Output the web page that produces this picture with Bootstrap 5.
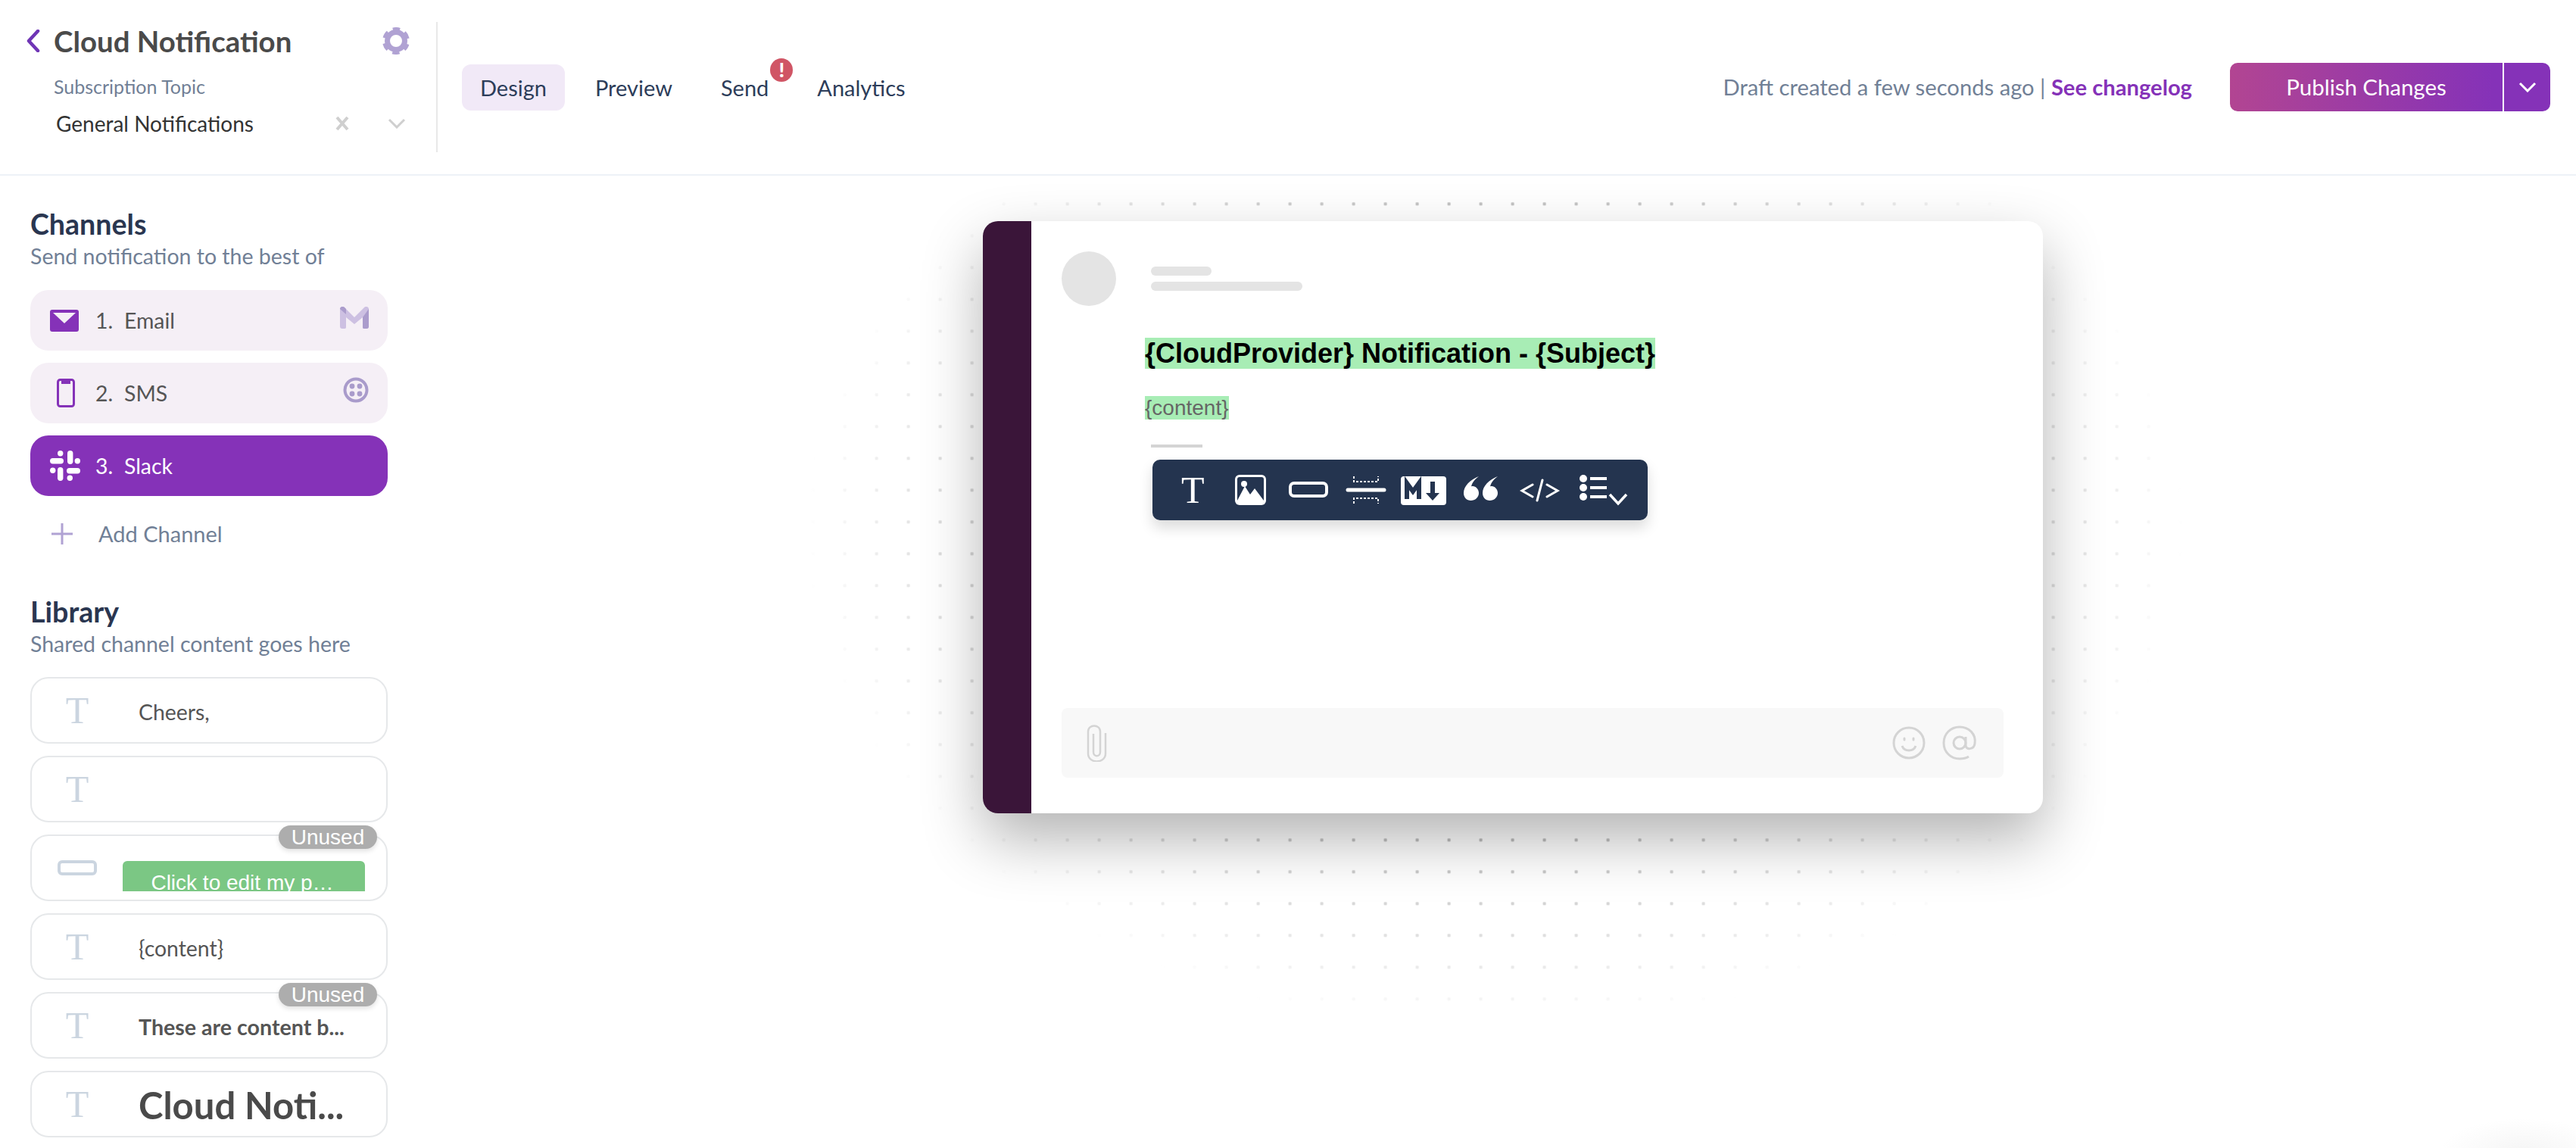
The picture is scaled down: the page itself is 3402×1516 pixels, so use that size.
<!DOCTYPE html>
<html lang="en">
<head>
  <meta charset="UTF-8" />
  <title>Cloud Notification</title>
  <link href="https://cdn.jsdelivr.net/npm/bootstrap@5.3.3/dist/css/bootstrap.min.css" rel="stylesheet" />
  <style>
    html, body { height: 100%; }
    body { font-family: "Lato", "Open Sans", sans-serif; font-size: 28.5px; color: #4a4a4a; background: radial-gradient(ellipse 110px 45px at 3333px 1522px, #f5f5f5, #fff); overflow: hidden; }
    svg { display: block; flex: none; }
    .hdr { height: 232px; border-bottom: 2px solid #edf2f7; }
    .topic-col { width: 578px; height: 172px; border-right: 2px solid #e8e8e8; padding: 2px 34px 0 35px; }
    .title-row { height: 46px; }
    .title-row h1 { font-size: 38.4px; line-height: 46px; font-weight: 700; color: #4a4a4a; margin: 0 0 0 18px; }
    .gear-icon { margin-left: auto; }
    .topic-label { font-size: 25px; line-height: 30px; color: #718096; margin: 22px 0 0 36px; }
    .topic-select { font-size: 28px; line-height: 38px; color: #333; margin: 15px 6px 0 39px; }
    .topic-x { margin-left: auto; margin-right: 50px; }
    .tab-list { margin-left: 32px; gap: 16px; font-size: 29px; }
    .tab-item { height: 61px; line-height: 61px; padding: 0 24px; border-radius: 12px; color: #2d3d5a; position: relative; }
    .tab-item.on { background: #f1e9f7; }
    .alert-dot { position: absolute; top: -8px; right: -8px; width: 30px; height: 31px; border-radius: 50%; background: #d05565; color: #fff; font-size: 27px; font-weight: 900; line-height: 30px; text-align: center; }
    .draft-note { color: #718096; margin-right: 50px; font-size: 29.2px; }
    .draft-note b { color: #8532b8; font-weight: 700; }
    .publish-btn { width: 423px; height: 64px; border-radius: 10px; background: linear-gradient(90deg, #b24592, #8532b8 82%); color: #fff; margin-right: 34px; font-size: 29.4px; }
    .publish-main { width: 362px; line-height: 64px; text-align: center; border-right: 2px solid #fff; }
    .publish-caret { width: 61px; }
    .side-col { width: 552px; padding: 40px 40px 0; flex: none; }
    .side-col h2 { font-size: 37.6px; line-height: 48px; font-weight: 700; color: #2a3650; margin: 0; }
    .side-sub { line-height: 36px; color: #718096; }
    .chan-list { margin-top: 27px; gap: 16px; font-size: 28.4px; }
    .chan-row { height: 80px; border-radius: 24px; background: #f5eff6; color: #555; padding: 0 25px 0 26px; }
    .chan-row.on { background: #8532b8; color: #fff; }
    .chan-ico { width: 42px; margin-right: 18px; }
    .chan-num { width: 38px; }
    .chan-brand { margin-left: auto; }
    .add-row { margin-top: 26px; height: 48px; color: #718096; padding-left: 28px; font-size: 29px; }
    .add-row span { margin-left: 34px; }
    .lib-title { margin-top: 55px !important; }
    .lib-list { margin-top: 26px; gap: 16px; font-size: 28.4px; }
    .lib-item { height: 88px; border: 2px solid #e6e8ea; border-radius: 24px; position: relative; color: #555; }
    .lib-ico { width: 120px; color: #cbd5e0; font-family: "Liberation Serif", serif; font-size: 50px; line-height: 1; text-align: center; }
    .lib-text { margin: 4px 0 0 21px; }
    .lib-text.bold { font-weight: 700; font-size: 28.6px; }
    .lib-text.big { font-weight: 700; font-size: 49px; color: #4a4a4a; }
    .btn-clip { width: 320px; height: 40px; overflow: hidden; background: #7bc784; border-radius: 6px 6px 0 0; color: #fff; text-align: center; font-family: "Liberation Sans", Arial, sans-serif; font-size: 28px; line-height: 57px; padding-right: 4px; align-self: flex-start; margin-top: 33px; }
    .unused-tag { position: absolute; top: -14px; right: 12px; width: 130px; height: 31px; line-height: 31px; border-radius: 16px; background: #adadad; color: #fff; text-align: center; font-family: "Liberation Sans", Arial, sans-serif; font-size: 28px; box-shadow: 0 3px 6px rgba(0,0,0,.12); }
    .stage { position: relative; min-width: 0; }
    .dot-field { position: absolute; left: 0; right: 0; top: 26px; bottom: 0; background-image: radial-gradient(circle, #969696 2px, transparent 2.6px); background-size: 42px 42px; background-position: -3.4px -9.7px; -webkit-mask-image: radial-gradient(ellipse 910px 660px at 1422px 442px, #000 40%, transparent 100%); mask-image: radial-gradient(ellipse 910px 660px at 1422px 442px, #000 40%, transparent 100%); }
    .msg-card { position: relative; width: 1400px; height: 782px; margin: 60px 0 0 746px; border-radius: 20px; background: #fff; box-shadow: 0 34px 80px rgba(0,0,0,.3); overflow: hidden; }
    .msg-rail { width: 64px; background: #3a1539; flex: none; }
    .msg-body { padding: 40px 0 0 40px; min-width: 0; position: relative; }
    .ava { width: 72px; height: 72px; border-radius: 50%; background: #e4e4e4; }
    .skel { height: 12px; border-radius: 6px; background: #e4e4e4; }
    .skel-a { width: 80px; }
    .skel-b { width: 200px; margin-top: 8px; }
    .skel-wrap { margin: 20px 0 0 46px; }
    .msg-text { margin-left: 110px; font-family: "Liberation Sans", Arial, sans-serif; }
    .msg-head { margin-top: 42px; font-size: 36px; line-height: 41px; font-weight: 700; color: #000; }
    .msg-copy { margin-top: 36px; font-size: 28px; line-height: 32px; color: #666; }
    .msg-head span, .msg-copy span { background: #a8edb5; }
    .msg-rule { width: 68px; height: 4px; background: #d4d4d4; margin: 32px 0 0 118px; }
    .tool-bar { width: 654px; height: 80px; margin: 16px 0 0 120px; border-radius: 10px; background: #24344f; box-shadow: 0 10px 18px rgba(0,0,0,.14); position: relative; }
    .tool-t { position: absolute; left: 38px; top: 13px; color: #fff; font-family: "Liberation Serif", serif; font-size: 50px; line-height: 54px; }
    .tool-svg { position: absolute; left: 0; top: 0; }
    .composer { position: absolute; left: 40px; top: 643px; width: 1244px; height: 92px; border-radius: 8px; background: #f8f8f8; padding: 0 34px 0 32px; }
    .at-ico { margin-left: 20px; }
  </style>
</head>
<body>
  <header class="hdr d-flex align-items-center">
    <div class="topic-col">
      <div class="title-row d-flex align-items-center">
        <svg width="18" height="30" viewBox="0 0 18 30"><path d="M15 2 3 15l12 13" fill="none" stroke="#6f35b5" stroke-width="4.5" stroke-linecap="round" stroke-linejoin="round"/></svg>
        <h1>Cloud Notification</h1>
        <svg class="gear-icon" width="38" height="36" viewBox="0 0 38 36"><circle cx="19" cy="18" r="11.5" fill="none" stroke="#b0a2d3" stroke-width="7"/><circle cx="19" cy="18" r="15.5" fill="none" stroke="#b0a2d3" stroke-width="5" stroke-dasharray="9 7.23" stroke-dashoffset="4.5" transform="rotate(30 19 18)"/></svg>
      </div>
      <div class="topic-label">Subscription Topic</div>
      <div class="topic-select d-flex align-items-center">
        <span>General Notifications</span>
        <svg class="topic-x" width="20" height="20" viewBox="0 0 20 20"><path d="M3 2l14 16M17 2 3 18" stroke="#cfcfcf" stroke-width="4"/></svg>
        <svg width="24" height="14" viewBox="0 0 24 14"><path d="M2 2l10 10L22 2" fill="none" stroke="#cfcfcf" stroke-width="3"/></svg>
      </div>
    </div>
    <nav class="tab-list d-flex">
      <div class="tab-item on">Design</div>
      <div class="tab-item">Preview</div>
      <div class="tab-item">Send<span class="alert-dot">!</span></div>
      <div class="tab-item">Analytics</div>
    </nav>
    <div class="draft-note ms-auto">Draft created a few seconds ago | <b>See changelog</b></div>
    <div class="publish-btn d-flex">
      <div class="publish-main">Publish Changes</div>
      <div class="publish-caret d-flex align-items-center justify-content-center">
        <svg width="24" height="14" viewBox="0 0 24 14"><path d="M2 2l10 10L22 2" fill="none" stroke="#fff" stroke-width="3"/></svg>
      </div>
    </div>
  </header>

  <div class="d-flex">
    <aside class="side-col">
      <h2>Channels</h2>
      <div class="side-sub">Send notification to the best of</div>
      <div class="chan-list d-flex flex-column">
        <div class="chan-row d-flex align-items-center">
          <div class="chan-ico"><svg width="38" height="29" viewBox="0 0 38 29"><rect width="38" height="29" rx="3" fill="#8532b8"/><path d="M4 4h30L19 18z" fill="#f5eff6"/></svg></div>
          <span class="chan-num">1.</span><span>Email</span>
          <svg class="chan-brand mb-2" width="38" height="29" viewBox="0 0 38 29"><path d="M0 3c0-3 4-4 6-2l13 13L32 1c2-2 6-1 6 2v23c0 2-1 3-3 3h-3c-2 0-2-1-2-3V14l-11 9L8 14v12c0 2 0 3-2 3H3c-2 0-3-1-3-3z" fill="#cdc0e2"/><path d="M30 14 38 3v23c0 2-1 3-3 3h-3c-2 0-2-1-2-3z" fill="#ab9ccc"/><path d="M0 3c0-3 4-4 6-2l2 2v7z" fill="#ab9ccc"/></svg>
        </div>
        <div class="chan-row d-flex align-items-center">
          <div class="chan-ico d-flex justify-content-center"><svg width="24" height="38" viewBox="0 0 24 38"><rect x="1.5" y="1.5" width="21" height="35" rx="3" fill="none" stroke="#8532b8" stroke-width="3"/><rect x="6" y="2" width="12" height="5" fill="#8532b8"/></svg></div>
          <span class="chan-num">2.</span><span>SMS</span>
          <svg class="chan-brand mb-2" width="34" height="34" viewBox="0 0 34 34"><circle cx="17" cy="17" r="14.5" fill="none" stroke="#a99bcb" stroke-width="4"/><circle cx="12" cy="12" r="3.4" fill="#a99bcb"/><circle cx="22" cy="12" r="3.4" fill="#a99bcb"/><circle cx="12" cy="22" r="3.4" fill="#a99bcb"/><circle cx="22" cy="22" r="3.4" fill="#a99bcb"/></svg>
        </div>
        <div class="chan-row on d-flex align-items-center">
          <div class="chan-ico"><svg width="40" height="40" viewBox="0 0 40 40" fill="#fff"><rect y="10" width="18" height="7.4" rx="3.7"/><rect x="10" width="7.4" height="7.4" rx="3.7"/><rect x="23" width="7.4" height="18" rx="3.7"/><rect x="32.6" y="10" width="7.4" height="7.4" rx="3.7"/><rect x="22" y="23" width="18" height="7.4" rx="3.7"/><rect x="22.6" y="32.6" width="7.4" height="7.4" rx="3.7"/><rect x="10" y="22" width="7.4" height="18" rx="3.7"/><rect y="22.6" width="7.4" height="7.4" rx="3.7"/></svg></div>
          <span class="chan-num">3.</span><span>Slack</span>
        </div>
      </div>
      <div class="add-row d-flex align-items-center">
        <svg width="28" height="28" viewBox="0 0 28 28"><path d="M14 0v28M0 14h28" stroke="#b0a2d3" stroke-width="3"/></svg>
        <span>Add Channel</span>
      </div>

      <h2 class="lib-title">Library</h2>
      <div class="side-sub">Shared channel content goes here</div>
      <div class="lib-list d-flex flex-column">
        <div class="lib-item d-flex align-items-center"><div class="lib-ico">T</div><div class="lib-text">Cheers,</div></div>
        <div class="lib-item d-flex align-items-center"><div class="lib-ico">T</div></div>
        <div class="lib-item d-flex align-items-center">
          <div class="lib-ico d-flex justify-content-center"><svg width="52" height="20" viewBox="0 0 52 20"><rect x="2" y="2" width="48" height="16" rx="4" fill="none" stroke="#cbd5e0" stroke-width="4"/></svg></div>
          <div class="btn-clip">Click to edit my p…</div>
          <span class="unused-tag">Unused</span>
        </div>
        <div class="lib-item d-flex align-items-center"><div class="lib-ico">T</div><div class="lib-text">{content}</div></div>
        <div class="lib-item d-flex align-items-center">
          <div class="lib-ico">T</div><div class="lib-text bold">These are content b...</div>
          <span class="unused-tag">Unused</span>
        </div>
        <div class="lib-item d-flex align-items-center"><div class="lib-ico">T</div><div class="lib-text big">Cloud Noti...</div></div>
      </div>
    </aside>

    <main class="stage flex-grow-1">
      <div class="dot-field"></div>
      <div class="msg-card d-flex">
        <div class="msg-rail"></div>
        <div class="msg-body flex-grow-1">
          <div class="d-flex">
            <div class="ava"></div>
            <div class="skel-wrap"><div class="skel skel-a"></div><div class="skel skel-b"></div></div>
          </div>
          <div class="msg-text">
            <div class="msg-head"><span>{CloudProvider} Notification - {Subject}</span></div>
            <div class="msg-copy"><span>{content}</span></div>
          </div>
          <div class="msg-rule"></div>
          <div class="tool-bar">
            <span class="tool-t">T</span>
            <svg class="tool-svg" width="654" height="80" viewBox="0 0 654 80">
              <rect x="109" y="20" width="41" height="40" rx="6" fill="#fff"/>
              <rect x="112" y="23" width="35" height="34" rx="3" fill="#24344f"/>
              <path d="M112 54l10-19 7 11 6-8 12 16v3h-35z" fill="#fff"/>
              <circle cx="121" cy="32" r="4" fill="#fff"/>
              <rect x="182" y="31" width="48" height="17" rx="5" fill="none" stroke="#fff" stroke-width="4"/>
              <path d="M258 40h48" stroke="#fff" stroke-width="5" stroke-linecap="round"/>
              <path d="M266 22v7h32v-7M266 58v-7h32v7" fill="none" stroke="#fff" stroke-width="2" stroke-dasharray="3 2"/>
              <rect x="328" y="22" width="60" height="38" rx="4" fill="#fff"/>
              <path d="M336 52V31l8 11 8-11v21" fill="none" stroke="#24344f" stroke-width="6"/>
              <path d="M373 29v15h6l-9 10-9-10h6V29z" fill="#24344f"/>
              <path d="M431 22c-12 5-20 13-20 22 0 6 4 10 9.5 10S431 50 431 44c0-5-4-9-8-9-1 0-1.5 0-2 .5 1-5 5-10 10-13.5zM456 22c-12 5-20 13-20 22 0 6 4 10 9.5 10S456 50 456 44c0-5-4-9-8-9-1 0-1.5 0-2 .5 1-5 5-10 10-13.5z" fill="#fff"/>
              <path d="M502 33l-14 8 14 8M521 33l14 8-14 8M515 27l-7 27" fill="none" stroke="#fff" stroke-width="3" stroke-linecap="round"/>
              <circle cx="569" cy="25" r="5" fill="#fff"/><circle cx="569" cy="37" r="5" fill="#fff"/><circle cx="569" cy="49" r="5" fill="#fff"/>
              <path d="M578 25h22M578 37h22M578 49h22" stroke="#fff" stroke-width="4"/>
              <path d="M604 46l11 12 11-12" fill="none" stroke="#fff" stroke-width="3.5"/>
            </svg>
          </div>
          <div class="composer d-flex align-items-center">
            <svg width="30" height="50" viewBox="0 0 30 50"><path d="M26 12v27c0 14-23 14-23 0V10C3 0 19 0 19 10v27c0 7-9 7-9 0V13" fill="none" stroke="#d4d4d4" stroke-width="2.5"/></svg>
            <svg class="ms-auto" width="46" height="46" viewBox="0 0 46 46" fill="none" stroke="#d4d4d4" stroke-width="3"><circle cx="23" cy="23" r="20"/><path d="M14 27c3 8 15 8 18 0"/><path d="M17 17v2M29 17v2" stroke-linecap="round"/></svg>
            <svg class="at-ico" width="48" height="46" viewBox="0 0 48 46" fill="none" stroke="#d4d4d4" stroke-width="3"><circle cx="24" cy="23" r="8"/><path d="M32 15v11c0 7 11 6 12-2C46 11 36 2 24 2 12 2 3 11 3 23s9 21 21 21c5 0 9-1 12-3"/></svg>
          </div>
        </div>
      </div>
    </main>
  </div>
  <script src="https://cdn.jsdelivr.net/npm/bootstrap@5.3.3/dist/js/bootstrap.bundle.min.js"></script>
</body>
</html>
